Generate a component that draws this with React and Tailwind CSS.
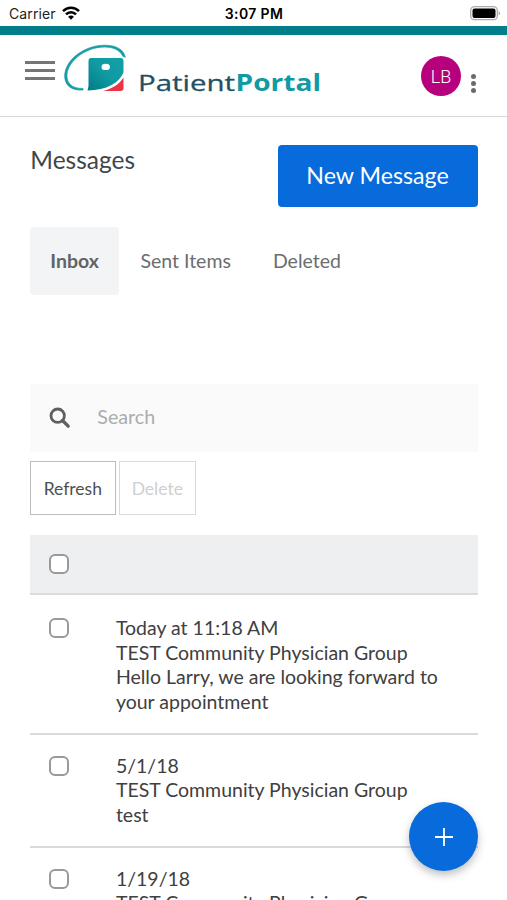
import React, { useState } from 'react';

const messages = [
  { id: 1, date: 'Today at 11:18 AM', sender: 'TEST Community Physician Group', subject: 'Hello Larry, we are looking forward to your appointment' },
  { id: 2, date: '5/1/18', sender: 'TEST Community Physician Group', subject: 'test' },
  { id: 3, date: '1/19/18', sender: 'TEST Community Physician Group', subject: 'test' },
];

const StatusBar = () => (
  <div className="grid h-[26px] shrink-0 grid-cols-3 items-center pt-px pr-[6px] pl-[9px] font-['Inter',sans-serif] text-[14px] text-[#222]">
    <div className="flex items-center gap-[6px]">
      <span className="tracking-[0.1px]">Carrier</span>
      <svg className="mb-[2px]" width="18" height="14" viewBox="0 0 18 14" fill="none" stroke="#000" strokeWidth="2.5">
        <path d="M1 5.2C5.4.6 12.6.6 17 5.2" />
        <path d="M4 8.4c2.8-2.9 7.2-2.9 10 0" />
        <path d="M9 13.8 6.1 10.8c1.6-1.6 4.2-1.6 5.8 0z" fill="#000" stroke="none" />
      </svg>
    </div>
    <span className="pr-[2px] text-center font-semibold tracking-[0.35px] text-black">3:07 PM</span>
    <svg className="justify-self-end" width="31" height="15" viewBox="0 0 31 15">
      <rect x="0.7" y="0.7" width="26.6" height="13" rx="3.8" fill="#fff" stroke="#aaa" strokeWidth="1.3" />
      <rect x="2.5" y="2.4" width="23" height="9.6" rx="2" fill="#000" />
      <path d="M28.6 5v4.4c2-.8 2-3.6 0-4.4z" fill="#aaa" />
    </svg>
  </div>
);

const Logo = () => (
  <svg width="262" height="64" viewBox="0 0 262 64" aria-label="PatientPortal">
    <defs>
      <linearGradient id="mark" x1="0" y1="1" x2="1" y2="0">
        <stop offset="0" stopColor="#007a86" />
        <stop offset="0.5" stopColor="#0f9aa2" />
        <stop offset="1" stopColor="#12a0a6" />
      </linearGradient>
    </defs>
    <path
      d="M20 50C8 51 1 45 1.7 34.5C3.5 18 23 5 42 5.2C53 5.3 61 9.5 62.3 17.3L59.8 16.3C57 10 50 7 41.5 7C23 7.2 5.6 20 4 34.2C3.2 43 9 48.8 20 48.4Z"
      fill="#159ca5"
      stroke="#159ca5"
      strokeWidth="0.7"
    />
    <path d="M28 18h29.500q3 0 3 3v11.500C56 43 44 50 24.500 50.600L25.500 46V21q0-3 2.500-3z" fill="url(#mark)" />
    <ellipse cx="42.700" cy="26.900" rx="4.200" ry="3.200" fill="#fff" />
    <path d="M60.500 37.500V48q0 3-3 3H40C50 48.500 56.500 44 60.500 37.500z" fill="#ee3344" />
    <g fontFamily="'Open Sans', sans-serif" fontSize="22.3">
      <text x="75" y="51" textLength="97" lengthAdjust="spacingAndGlyphs" fill="#1f5064" stroke="#1f5064" strokeWidth="0.3">Patient</text>
      <text x="172.500" y="51" textLength="85.500" lengthAdjust="spacingAndGlyphs" fill="#109aa3" fontWeight="700">Portal</text>
    </g>
  </svg>
);

const Header = () => (
  <header className="flex h-[82px] shrink-0 items-start border-b border-[#d8d8d8] pl-[25px]">
    <button type="button" className="mt-[25.500px] flex w-[30px] flex-col gap-[5px]">
      <span className="h-[3.300px] w-full bg-[#757575]" />
      <span className="h-[3.300px] w-full bg-[#757575]" />
      <span className="h-[3.300px] w-full bg-[#757575]" />
    </button>
    <div className="ml-[8px] pt-[5px]">
      <Logo />
    </div>
    <div className="mt-[21px] ml-auto flex h-[40px] w-[40px] items-center justify-center rounded-full bg-[#b6007c] pt-px font-['Roboto',sans-serif] text-[18px] font-light text-white">
      LB
    </div>
    <button type="button" className="mt-[38.500px] mr-[31px] ml-[10px] flex flex-col gap-[2.300px]">
      <span className="h-[5px] w-[5px] rounded-full bg-[#6b6b6b]" />
      <span className="h-[5px] w-[5px] rounded-full bg-[#6b6b6b]" />
      <span className="h-[5px] w-[5px] rounded-full bg-[#6b6b6b]" />
    </button>
  </header>
);

const Checkbox = ({ checked, onChange }) => (
  <input
    type="checkbox"
    checked={checked}
    onChange={onChange}
    className="block h-5 w-5 shrink-0 appearance-none rounded-[6px] border-2 border-[#999] bg-white checked:bg-[#076bdb]"
  />
);

const tabs = ['Inbox', 'Sent Items', 'Deleted'];

export default function App() {
  const [tab, setTab] = useState('Inbox');
  const [query, setQuery] = useState('');
  const [selected, setSelected] = useState([]);

  const toggle = (id) => {
    setSelected(selected.includes(id) ? selected.filter((s) => s !== id) : [...selected, id]);
  };

  const toggleAll = () => {
    setSelected(selected.length === messages.length ? [] : messages.map((m) => m.id));
  };

  return (
    <div className="relative flex h-[900px] w-[507px] flex-col overflow-hidden bg-white font-['Lato',sans-serif] text-[#404040]">
      <StatusBar />
      <div className="h-[9px] shrink-0 bg-[#007f8a]" />
      <Header />

      <main className="flex flex-col pt-7 pr-[29.500px] pl-[30.300px]">
        <div className="flex items-start justify-between">
          <h1 className="pt-px text-[24.500px] leading-[28px] text-[#414649]">Messages</h1>
          <button type="button" className="h-[62px] w-[200px] rounded-[4px] bg-[#076bdb] pb-px text-[23.200px] text-white">
            New Message
          </button>
        </div>

        <nav className="mt-5 flex">
          {tabs.map((name) => (
            <button
              key={name}
              type="button"
              onClick={() => setTab(name)}
              className={
                name === tab
                  ? 'mr-[1px] h-[68px] rounded-[4px] bg-[#f2f4f5] px-[20px] text-[19.500px] font-bold text-[#5f6466]'
                  : 'mr-[1px] h-[68px] px-[20.500px] text-[19.500px] text-[#6a6e70]'
              }
            >
              {name}
            </button>
          ))}
        </nav>

        <div className="mt-[89px] flex h-[68px] items-center bg-[#fafafa] pl-[19px]">
          <svg width="22" height="22" viewBox="0 0 22 22" fill="none" stroke="#606060">
            <circle cx="8.700" cy="8.700" r="6.700" strokeWidth="2.800" />
            <path d="m13.500 13.500 5.700 5.700" strokeWidth="3.300" strokeLinecap="round" />
          </svg>
          <input
            value={query}
            onChange={(e) => setQuery(e.target.value)}
            placeholder="Search"
            className="ml-[26px] w-[340px] bg-transparent pb-[2px] text-[19.700px] outline-none placeholder:text-[#aaadae]"
          />
        </div>

        <div className="mt-[9px] flex gap-[3px]">
          <button type="button" className="h-[54px] w-[86px] border border-[#bdbdbd] pt-[2px] pr-px text-[17.500px] text-[#4d5153]">Refresh</button>
          <button type="button" className="h-[54px] w-[77px] border border-[#dadada] pt-[2px] pr-px text-[17.500px] text-[#cdd0d1]">Delete</button>
        </div>

        <div className="mt-5 flex h-[60px] items-center border-b-2 border-[#d9dbdc] bg-[#edeff0] pl-[19px]">
          <Checkbox checked={selected.length === messages.length} onChange={toggleAll} />
        </div>

        <div className="pt-[2px]">
          {messages.map((m) => (
            <div key={m.id} className="flex items-start border-b-2 border-[#d9d9d9] pt-[19.300px] pb-[18.300px] pl-[19px]">
              <div className="pt-[2px]">
                <Checkbox checked={selected.includes(m.id)} onChange={() => toggle(m.id)} />
              </div>
              <div className="ml-[46.600px] w-[335px] text-[19.500px] leading-[24.500px]">
                <p>{m.date}</p>
                <p>{m.sender}</p>
                <p>{m.subject}</p>
              </div>
            </div>
          ))}
        </div>
      </main>

      <button
        type="button"
        className="absolute top-[802px] left-[409px] flex h-[69px] w-[69px] items-center justify-center rounded-full bg-[#076bdb] shadow-[0_4px_9px_rgba(0,0,0,0.25)]"
      >
        <svg width="20" height="20" viewBox="0 0 20 20" stroke="#fff" strokeWidth="1.800">
          <path d="M10 1v18M1 10h18" />
        </svg>
      </button>
    </div>
  );
}
